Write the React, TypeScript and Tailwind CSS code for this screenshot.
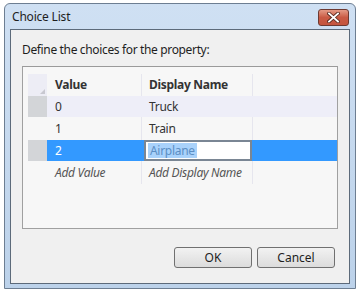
import React from "react";

const font = { fontFamily: '"Noto Sans", "Open Sans", sans-serif' };

export default function App() {
  return (
    <div className="w-[359px] h-[290px] bg-white overflow-hidden" style={font}>
      <div className="ml-[4px] mt-[3px] w-[352px] h-[286px] flex flex-col rounded-t-[6px] border border-[#6d7e92] bg-gradient-to-b from-[#cfe0f3] to-[#bcd2ea] px-[5px] pb-[4px]">
        {/* title bar */}
        <div className="h-[25px] flex items-center justify-between shrink-0">
          <span className="text-[12px] text-[#1e1e1e] pl-[2px] tracking-[-0.2px]">Choice List</span>
          <div className="w-[31px] h-[17px] mt-[1px] mr-[1px] rounded-[3px] border border-[#6d3a32] bg-gradient-to-b from-[#e49a86] via-[#c95a44] to-[#c4553f] flex items-center justify-center">
            <svg width="13" height="11" viewBox="0 0 13 11">
              <path d="M2 1.5 L11 9.5 M11 1.5 L2 9.5" stroke="#5a2a20" strokeWidth="3.6" strokeLinecap="square" />
              <path d="M2 1.5 L11 9.5 M11 1.5 L2 9.5" stroke="#ffffff" strokeWidth="1.8" strokeLinecap="square" />
            </svg>
          </div>
        </div>
        {/* client */}
        <div className="flex-1 border border-[#5c6a7a] bg-[#f0f0f0] flex flex-col px-[11px]">
          <div className="h-[36px] flex items-center pt-[4px] text-[12px] text-[#1e1e1e] tracking-[-0.35px]">
            Define the choices for the property:
          </div>
          <div className="h-[163px] border border-[#a0a0a0] border-t-[#9a9a9a] bg-[#f7f7f7] pt-[7px] pl-[5px] text-[12px] text-[#333] tracking-[-0.3px]">
            {/* header */}
            <div className="flex h-[22px]">
              <div className="w-[19px] bg-[#ededf5] relative">
                <svg className="absolute right-[2px] bottom-[2px]" width="5" height="5" viewBox="0 0 5 5">
                  <path d="M5 0 L5 5 L0 5 Z" fill="#c8c8d0" />
                </svg>
              </div>
              <div className="w-[95px] pl-[8px] flex items-center font-bold text-[#333] border-r border-[#e6e6ee]">Value</div>
              <div className="w-[111px] pl-[7px] flex items-center font-bold text-[#333] border-r border-[#e6e6ee]">Display Name</div>
              <div className="flex-1" />
            </div>
            {/* row 0 */}
            <div className="flex h-[21px]">
              <div className="w-[19px] bg-[#d3d5d8]" />
              <div className="flex-1 flex bg-[#eeeef8]">
                <div className="w-[95px] pl-[8px] flex items-center">0</div>
                <div className="w-[111px] pl-[7px] flex items-center">Truck</div>
              </div>
            </div>
            {/* row 1 */}
            <div className="flex h-[23px]">
              <div className="w-[19px]" />
              <div className="w-[95px] pl-[8px] flex items-center border-r border-[#e6e6ee]">1</div>
              <div className="w-[111px] pl-[7px] flex items-center border-r border-[#e6e6ee]">Train</div>
            </div>
            {/* row 2 selected */}
            <div className="flex h-[21px]">
              <div className="w-[19px] bg-[#d3d5d8]" />
              <div className="flex-1 flex bg-[#3399ff]">
                <div className="w-[97px] pl-[8px] flex items-center text-white">2</div>
                <div className="w-[108px] h-[21px] border-2 border-[#7a8694] bg-white flex items-center pl-[2px]">
                  <span className="bg-[#a9d2fb] text-[#5b8ec4] px-[2px] leading-[15px]">Airplane</span>
                </div>
                <div className="flex-1 ml-[2px]" />
              </div>
            </div>
            {/* add row */}
            <div className="flex h-[23px] italic text-[#555]">
              <div className="w-[19px]" />
              <div className="w-[95px] pl-[8px] flex items-center border-r border-[#e6e6ee]">Add Value</div>
              <div className="w-[111px] pl-[7px] flex items-center border-r border-[#e6e6ee]">Add Display Name</div>
            </div>
          </div>
          <div className="flex justify-end gap-[5px] mt-[18px] pr-[3px]">
            <button className="w-[78px] h-[21px] rounded-[3px] border border-[#707070] bg-gradient-to-b from-[#f2f2f2] to-[#dcdcdc] text-[12px] text-[#1e1e1e]">OK</button>
            <button className="w-[78px] h-[21px] rounded-[3px] border border-[#707070] bg-gradient-to-b from-[#f2f2f2] to-[#dcdcdc] text-[12px] text-[#1e1e1e]">Cancel</button>
          </div>
        </div>
      </div>
    </div>
  );
}
